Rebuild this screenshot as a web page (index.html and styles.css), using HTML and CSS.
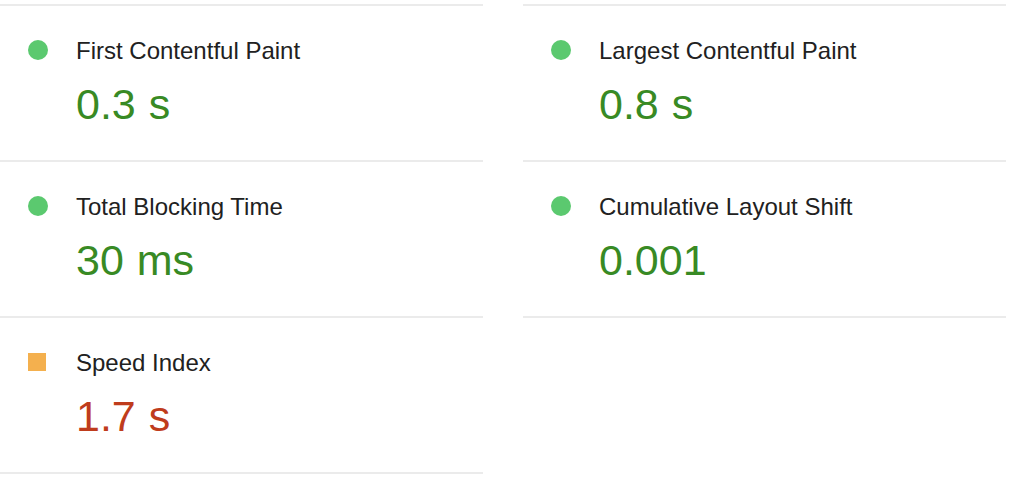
FILE: index.html
```html
<!DOCTYPE html>
<html lang="en">
<head>
<meta charset="utf-8">
<title>Metrics</title>
<link rel="stylesheet" href="styles.css">
</head>
<body>
<div class="metrics">
  <div class="metric pass top">
    <span class="icon"></span>
    <div class="label">First Contentful Paint</div>
    <div class="value">0.3 s</div>
  </div>
  <div class="metric pass top">
    <span class="icon"></span>
    <div class="label">Largest Contentful Paint</div>
    <div class="value">0.8 s</div>
  </div>
  <div class="metric pass">
    <span class="icon"></span>
    <div class="label">Total Blocking Time</div>
    <div class="value">30 ms</div>
  </div>
  <div class="metric pass">
    <span class="icon"></span>
    <div class="label">Cumulative Layout Shift</div>
    <div class="value">0.001</div>
  </div>
  <div class="metric average">
    <span class="icon"></span>
    <div class="label">Speed Index</div>
    <div class="value">1.7 s</div>
  </div>
</div>
</body>
</html>
```
FILE: styles.css
```css
html, body {
  margin: 0;
  padding: 0;
  background: #ffffff;
}

body {
  font-family: "Liberation Sans", Arial, Helvetica, sans-serif;
  color: #212121;
}

.metrics {
  display: grid;
  grid-template-columns: 483px 483px;
  column-gap: 40px;
  padding-top: 4px;
  align-items: start;
}

.metric {
  display: grid;
  grid-template-columns: 20px 1fr;
  column-gap: 28px;
  padding: 31px 0 32px 28px;
  border-bottom: 2px solid #ebebeb;
}

.metric.top {
  border-top: 2px solid #ebebeb;
}

.icon {
  grid-column: 1;
  grid-row: 1;
  display: block;
  margin-top: 3px;
  width: 20px;
  height: 20px;
}

.pass .icon {
  border-radius: 50%;
  background: #5bc96f;
}

.average .icon {
  width: 18px;
  height: 18px;
  margin-top: 4px;
  background: #f4b04e;
}

.label {
  grid-column: 2;
  grid-row: 1;
  font-size: 24px;
  line-height: 28px;
  color: #212121;
}

.value {
  grid-column: 2;
  grid-row: 2;
  margin-top: 15px;
  font-size: 43px;
  line-height: 48px;
  word-spacing: 1px;
}

.pass .value {
  color: #388a24;
}

.average .value {
  color: #bf3c1c;
}
```
